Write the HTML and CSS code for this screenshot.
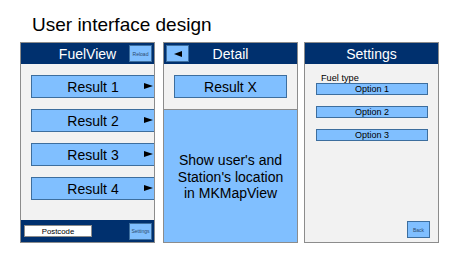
FILE: index.html
```html
<!DOCTYPE html>
<html lang="en">
<head>
  <meta charset="UTF-8" />
  <title>User interface design</title>
  <link rel="stylesheet" href="styles.css">
</head>
<body>
  <h1 class="page-title">User interface design</h1>

  <div class="screens">
    <!-- List screen -->
    <section class="screen">
      <header class="bar">
        <span class="bar-title">FuelView</span>
        <span class="mini-btn bar-right">Reload</span>
      </header>
      <div class="list-body">
        <div class="result">Result 1<span class="chev"></span></div>
        <div class="result">Result 2<span class="chev"></span></div>
        <div class="result">Result 3<span class="chev"></span></div>
        <div class="result">Result 4<span class="chev"></span></div>
      </div>
      <footer class="bar footer">
        <span class="postcode">Postcode</span>
        <span class="mini-btn">Settings</span>
      </footer>
    </section>

    <!-- Detail screen -->
    <section class="screen">
      <header class="bar">
        <span class="mini-btn bar-left"><span class="back-arrow"></span></span>
        <span class="bar-title">Detail</span>
      </header>
      <div class="detail-top">
        <div class="result-x">Result X</div>
      </div>
      <div class="map">Show user's and<br>Station's location<br>in MKMapView</div>
    </section>

    <!-- Settings screen -->
    <section class="screen">
      <header class="bar">
        <span class="bar-title">Settings</span>
      </header>
      <div class="settings-body">
        <div class="label">Fuel type</div>
        <div class="option">Option 1</div>
        <div class="option">Option 2</div>
        <div class="option">Option 3</div>
        <div class="settings-foot">
          <span class="mini-btn back">Back</span>
        </div>
      </div>
    </section>
  </div>
</body>
</html>
```

FILE: styles.css
```css
body {
  margin: 0;
  background: #fff;
  font-family: "Liberation Sans", Arial, sans-serif;
  color: #000;
  width: 450px;
  height: 253px;
  overflow: hidden;
}
.page-title {
  margin: 0;
  padding: 14px 0 0 32px;
  height: 28px;
  font-size: 19px;
  font-weight: normal;
  line-height: 22px;
}
.screens {
  display: flex;
  padding-left: 20px;
}
.screen {
  width: 133px;
  height: 199px;
  border: 1px solid #8c8c8c;
  background: #f2f2f2;
  display: flex;
  flex-direction: column;
  margin-right: 8px;
  overflow: hidden;
}
.screen:nth-child(2) {
  margin-right: 6px;
}
.bar {
  position: relative;
  height: 21px;
  background: #00306e;
  display: flex;
  align-items: center;
  justify-content: center;
  flex-shrink: 0;
}
.bar-title {
  color: #fff;
  font-size: 14px;
}
.mini-btn {
  background: #80bfff;
  border: 1px solid #3d6e9e;
  color: #2c4a6e;
  font-size: 5px;
  display: flex;
  align-items: center;
  justify-content: center;
  width: 21px;
  height: 15px;
  box-sizing: content-box;
}
.bar-right {
  position: absolute;
  right: 2px;
  top: 2px;
}
.bar-left {
  position: absolute;
  left: 2px;
  top: 2px;
}
.back-arrow {
  width: 0;
  height: 0;
  border-top: 3px solid transparent;
  border-bottom: 3px solid transparent;
  border-right: 8px solid #000;
}
.list-body {
  flex: 1;
  padding: 11px 0 0 10px;
  display: flex;
  flex-direction: column;
  gap: 11px;
}
.result {
  position: relative;
  height: 21px;
  background: #80bfff;
  border: 1px solid #3d6e9e;
  border-right: none;
  font-size: 14px;
  display: flex;
  align-items: center;
  justify-content: center;
}
.chev {
  position: absolute;
  right: 1px;
  top: 7px;
  width: 0;
  height: 0;
  border-top: 3px solid transparent;
  border-bottom: 3px solid transparent;
  border-left: 9px solid #000;
}
.footer {
  height: 22px;
  justify-content: space-between;
  padding: 0 2px 0 3px;
}
.postcode {
  width: 66px;
  height: 10px;
  background: #fff;
  border: 1px solid #8c8c8c;
  font-size: 7.8px;
  display: flex;
  align-items: center;
  justify-content: center;
}
.detail-top {
  height: 45px;
  padding: 11px 0 0 10px;
  box-sizing: border-box;
  flex-shrink: 0;
}
.result-x {
  width: 111px;
  height: 21px;
  background: #80bfff;
  border: 1px solid #3d6e9e;
  font-size: 14px;
  display: flex;
  align-items: center;
  justify-content: center;
}
.map {
  flex: 1;
  background: #80bfff;
  border-top: 1px solid #8c8c8c;
  display: flex;
  align-items: center;
  justify-content: center;
  text-align: center;
  font-size: 14px;
  line-height: 16.5px;
  padding-top: 2px;
}
.settings-body {
  flex: 1;
  padding: 10px 0 4px 11px;
  display: flex;
  flex-direction: column;
}
.label {
  font-size: 9.2px;
  line-height: 9px;
  padding-left: 5px;
}
.option {
  width: 110px;
  height: 10px;
  background: #80bfff;
  border: 1px solid #3d6e9e;
  font-size: 9px;
  display: flex;
  align-items: center;
  justify-content: center;
  margin-bottom: 11px;
}
.settings-foot {
  margin-top: auto;
  display: flex;
  justify-content: flex-end;
  padding-right: 8px;
}
.back {
  height: 15px;
}
```
